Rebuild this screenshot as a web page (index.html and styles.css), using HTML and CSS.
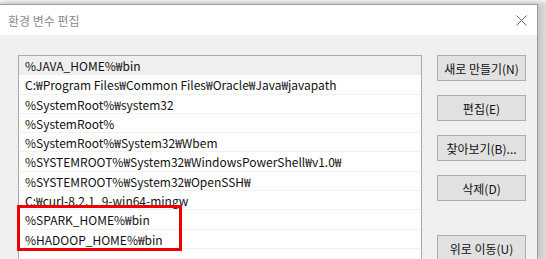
FILE: index.html
```html
<!DOCTYPE html>
<html>
<head>
  <title>환경 변수 편집</title>
  <link rel="stylesheet" href="styles.css">
</head>
<body>
  <div class="window">
    <div class="titlebar">
      <span class="title">환경 변수 편집</span>
      <svg class="close" width="11" height="11" viewBox="0 0 11 11">
        <path d="M0.5 0.5 L10.5 10.5 M10.5 0.5 L0.5 10.5" stroke="#6e6e6e" stroke-width="1" fill="none"/>
      </svg>
    </div>
    <div class="content">
      <ul class="list">
        <li class="row selected">%JAVA_HOME%₩bin</li>
        <li class="row">C:₩Program Files₩Common Files₩Oracle₩Java₩javapath</li>
        <li class="row">%SystemRoot%₩system32</li>
        <li class="row">%SystemRoot%</li>
        <li class="row">%SystemRoot%₩System32₩Wbem</li>
        <li class="row">%SYSTEMROOT%₩System32₩WindowsPowerShell₩v1.0₩</li>
        <li class="row">%SYSTEMROOT%₩System32₩OpenSSH₩</li>
        <li class="row">C:₩curl-8.2.1_9-win64-mingw</li>
        <li class="row">%SPARK_HOME%₩bin</li>
        <li class="row">%HADOOP_HOME%₩bin</li>
        <div class="highlight"></div>
      </ul>
      <div class="buttons">
        <button>새로 만들기(N)</button>
        <button>편집(E)</button>
        <button>찾아보기(B)...</button>
        <button>삭제(D)</button>
        <button class="spaced">위로 이동(U)</button>
      </div>
    </div>
  </div>
</body>
</html>
```

FILE: styles.css
```css
body {
  margin: 0;
  padding: 4px 0 0 0;
  background: linear-gradient(to bottom, #f4f4f4, #dcdcdc 4px);
  font-family: "Noto Sans CJK KR", "Noto Sans", sans-serif;
  font-size: 12px;
  height: 259px;
  box-sizing: border-box;
  overflow: hidden;
}

.window {
  width: 538px;
  height: 255px;
  box-sizing: border-box;
  border-top: 1px solid #9c9c9c;
  border-right: 1px solid #9c9c9c;
  background: #f0f0f0;
  box-shadow: 3px -1px 6px rgba(0,0,0,0.12);
  overflow: hidden;
}

.titlebar {
  height: 30px;
  background: white;
  display: flex;
  align-items: center;
  justify-content: space-between;
  padding: 0 10px 0 8px;
}

.title {
  color: #8c8c8c;
  font-size: 12px;
  margin-top: 1px;
}

.content {
  display: flex;
  padding: 20px 0 0 18px;
  gap: 15px;
}

.list {
  position: relative;
  list-style: none;
  margin: 0;
  padding: 0;
  width: 404px;
  height: 204px;
  box-sizing: border-box;
  border: 1px solid #a9a9ae;
  border-bottom: none;
  background: white;
}

.row {
  height: 19.3px;
  box-sizing: border-box;
  padding: 1px 0 0 6px;
  line-height: 18px;
  border-bottom: 1px solid #f1f1f1;
  white-space: nowrap;
  color: #111;
}

.row.selected {
  background: #efefef;
  border-bottom-color: #efefef;
}

.highlight {
  position: absolute;
  left: -2px;
  top: 149px;
  width: 165px;
  height: 46px;
  box-sizing: border-box;
  border: 3px solid #f00000;
}

.buttons {
  display: flex;
  flex-direction: column;
  gap: 14px;
}

button {
  width: 89px;
  height: 26px;
  background: #e1e1e1;
  border: 1px solid #adadad;
  font-family: "Noto Sans CJK KR", "Noto Sans", sans-serif;
  font-size: 12px;
  color: #111;
  padding: 0;
}

button.spaced {
  margin-top: 20px;
}
```
